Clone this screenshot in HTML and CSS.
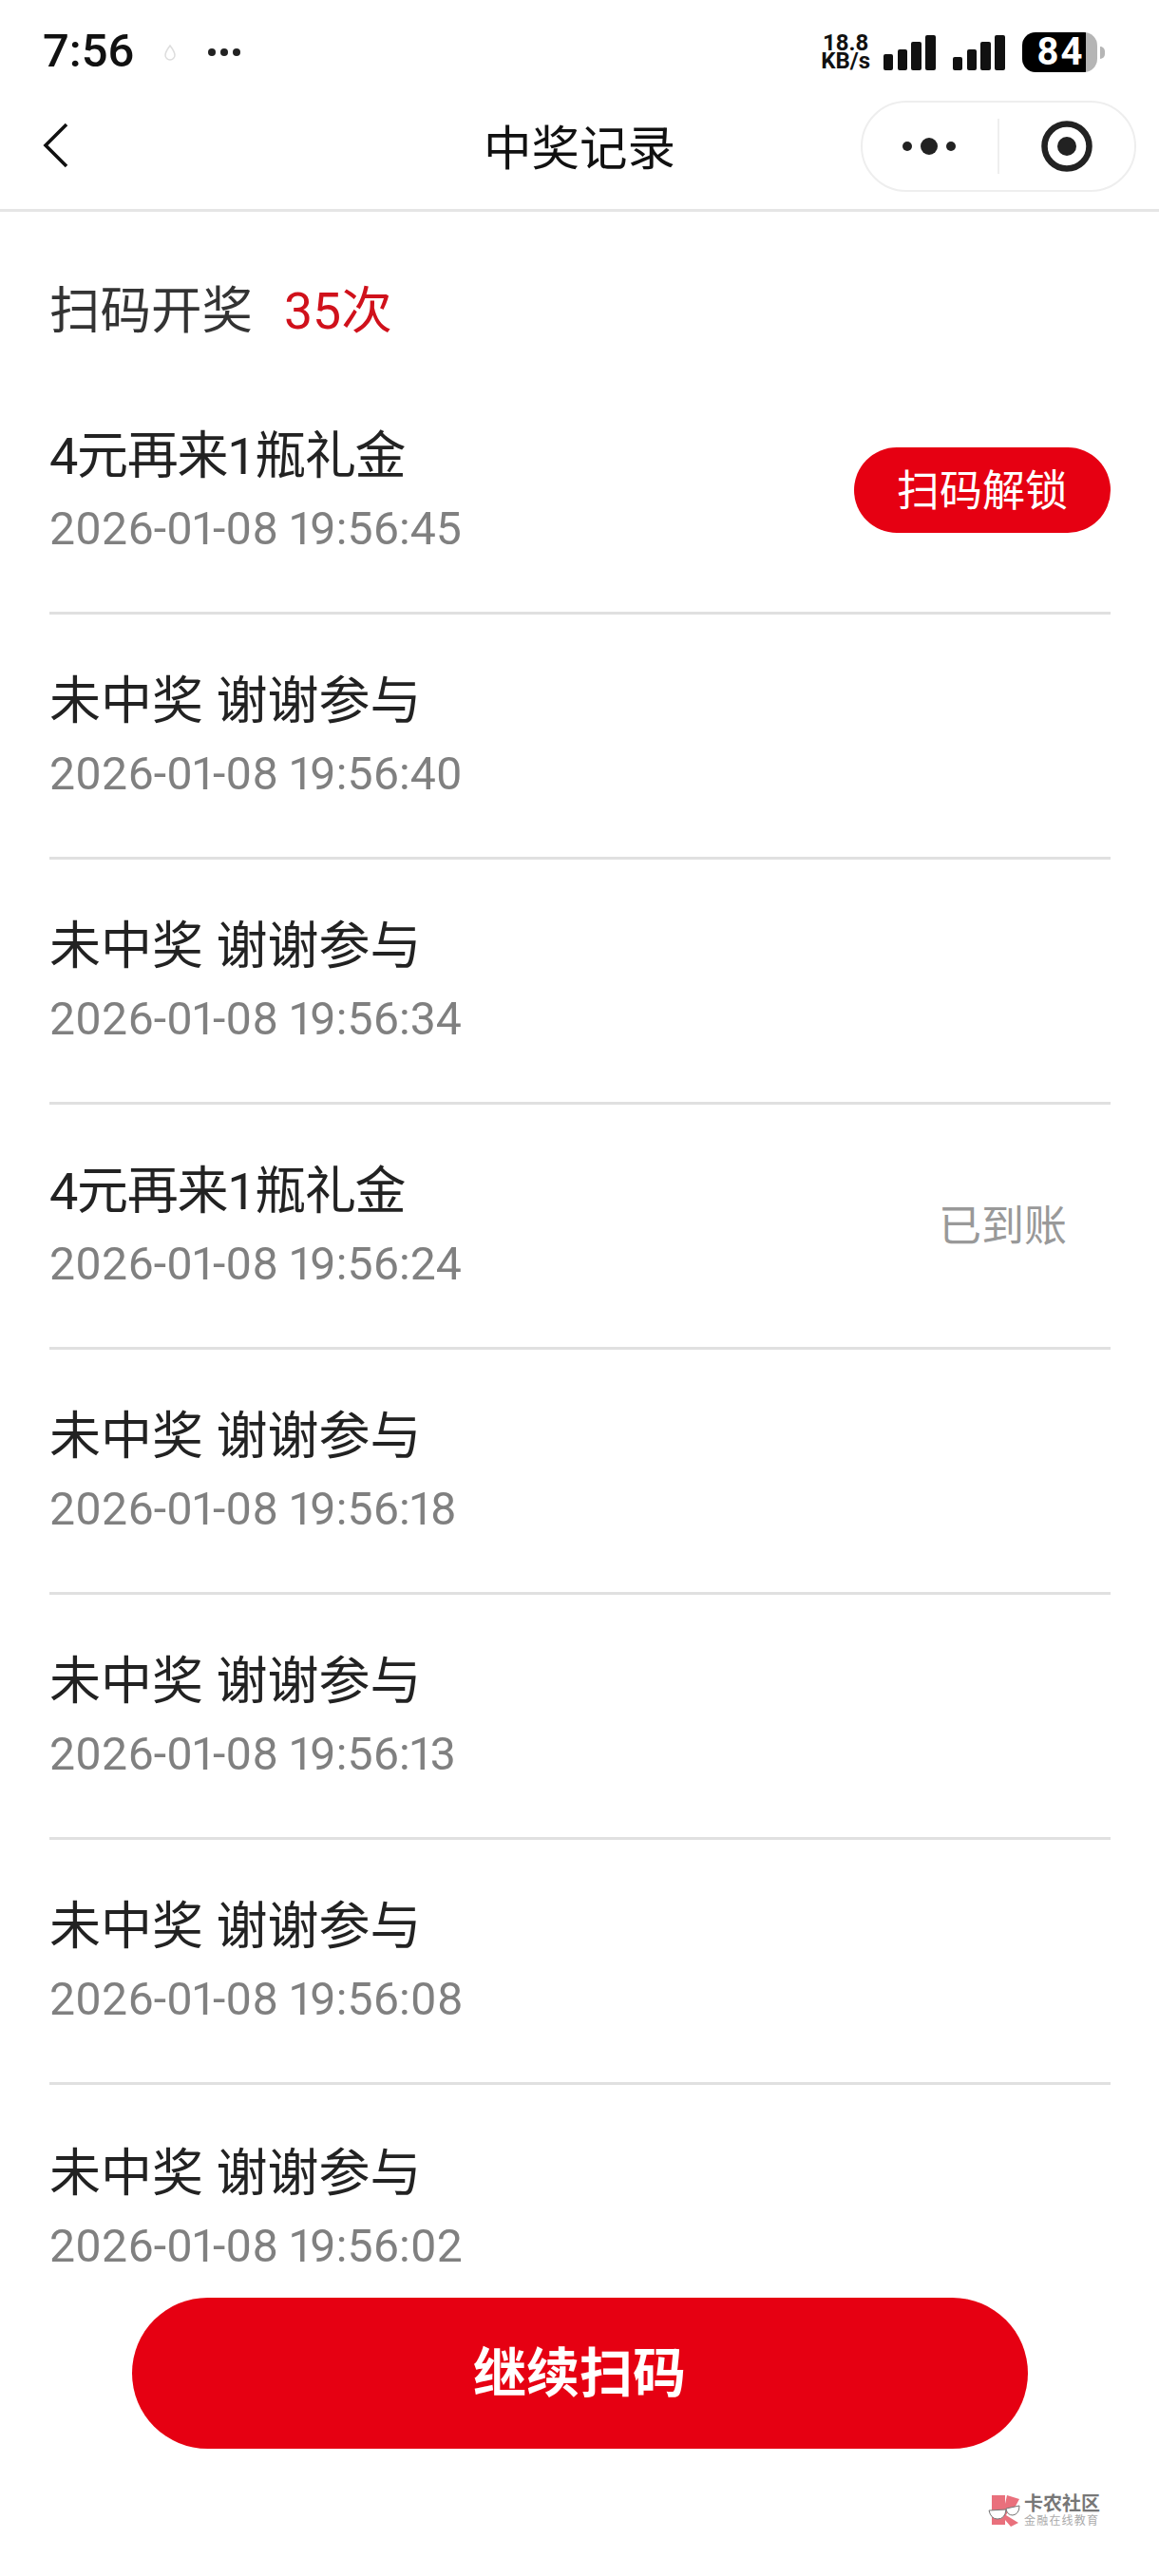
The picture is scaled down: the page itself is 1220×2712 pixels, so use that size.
FILE: index.html
```html
<!DOCTYPE html>
<html lang="zh-CN">
  <head>
    <meta charset="UTF-8" />
    <meta name="viewport" content="width=device-width, initial-scale=1.0" />
    <link rel="stylesheet" href="styles.css">
    <title>中奖记录</title>
  </head>
  <body>
    <div class="page">
      <!-- status bar -->
      <div class="status-bar">
        <div class="status-left">
          <span class="clock">7:56</span>
          <svg class="drop" width="14" height="17" viewBox="0 0 14 17"><path d="M7 1 C4 5 2 8 2 11 a5 5 0 0 0 10 0 C12 8 10 5 7 1z" fill="none" stroke="#ddd" stroke-width="1.5"/></svg>
          <span class="more-dots"><i></i><i></i><i></i></span>
        </div>
        <div class="status-right">
          <span class="speed">18.8<br>KB/s</span>
          <svg class="signal" width="55" height="37" viewBox="0 0 55 37"><rect x="0" y="20" width="10" height="17" rx="2"/><rect x="15" y="15" width="10" height="22" rx="2"/><rect x="29" y="7" width="11" height="30" rx="2"/><rect x="44" y="0" width="11" height="37" rx="2"/></svg>
          <svg class="signal" width="55" height="37" viewBox="0 0 55 37"><rect x="0" y="23" width="10" height="14" rx="2"/><rect x="15" y="15" width="10" height="22" rx="2"/><rect x="29" y="7" width="11" height="30" rx="2"/><rect x="44" y="0" width="11" height="37" rx="2"/></svg>
          <div class="battery"><span class="battery-level">84</span></div>
          <span class="battery-nub"></span>
        </div>
      </div>

      <!-- nav -->
      <div class="nav">
        <svg class="back" width="28" height="48" viewBox="0 0 28 48"><path d="M25 2 L3 24 L25 46" fill="none" stroke="#111" stroke-width="3.6"/></svg>
        <div class="nav-title">中奖记录</div>
        <div class="capsule">
          <div class="capsule-btn">
            <svg width="58" height="20" viewBox="0 0 58 20"><circle cx="5" cy="10" r="5" fill="#222"/><circle cx="28" cy="10" r="9" fill="#222"/><circle cx="51" cy="10" r="5" fill="#222"/></svg>
          </div>
          <span class="capsule-line"></span>
          <div class="capsule-btn">
            <svg width="54" height="54" viewBox="0 0 54 54"><circle cx="27" cy="27" r="23.5" fill="none" stroke="#222" stroke-width="6.5"/><circle cx="27" cy="27" r="10" fill="#222"/></svg>
          </div>
        </div>
      </div>

      <div class="summary">
        <span>扫码开奖</span>
        <span class="summary-count">35次</span>
      </div>

      <ul class="record-list">
        <li class="record">
          <div>
            <div class="record-name prize">4元再来1瓶礼金</div>
            <div class="record-time">2026-01-08 19:56:45</div>
          </div>
          <button class="unlock">扫码解锁</button>
        </li>
        <li class="record">
          <div>
            <div class="record-name">未中奖 谢谢参与</div>
            <div class="record-time">2026-01-08 19:56:40</div>
          </div>
        </li>
        <li class="record">
          <div>
            <div class="record-name">未中奖 谢谢参与</div>
            <div class="record-time">2026-01-08 19:56:34</div>
          </div>
        </li>
        <li class="record">
          <div>
            <div class="record-name prize">4元再来1瓶礼金</div>
            <div class="record-time">2026-01-08 19:56:24</div>
          </div>
          <span class="arrived">已到账</span>
        </li>
        <li class="record">
          <div>
            <div class="record-name">未中奖 谢谢参与</div>
            <div class="record-time">2026-01-08 19:56:18</div>
          </div>
        </li>
        <li class="record">
          <div>
            <div class="record-name">未中奖 谢谢参与</div>
            <div class="record-time">2026-01-08 19:56:13</div>
          </div>
        </li>
        <li class="record">
          <div>
            <div class="record-name">未中奖 谢谢参与</div>
            <div class="record-time">2026-01-08 19:56:08</div>
          </div>
        </li>
        <li class="record">
          <div>
            <div class="record-name">未中奖 谢谢参与</div>
            <div class="record-time">2026-01-08 19:56:02</div>
          </div>
        </li>
      </ul>

      <!-- bottom button sits over the list -->
      <div class="footer">
        <button class="continue">继续扫码</button>
        <div class="watermark">
          <svg width="34" height="35" viewBox="0 0 34 35">
            <path d="M4 1 H18 V10 L20 1 L33 5 L27 16 H22 L19 22 L32 30 L24 34 L18 27 V32 H4z" fill="#e9707c"/>
            <path d="M1 17 L19 16 Q18 26 10 26 Q3 26 1 17z" fill="#fff" stroke="#777" stroke-width="1"/>
            <path d="M19 15 L33 12 Q33 21 26 22 Q20 22 19 15z" fill="#fff" stroke="#777" stroke-width="1"/>
          </svg>
          <div>
            <div class="watermark-name">卡农社区</div>
            <div class="watermark-sub">金融在线教育</div>
          </div>
        </div>
      </div>
    </div>
  </body>
</html>
```

FILE: styles.css
```css
/* Basic Style */
body {
  margin: 0;
  background: #fff;
  font-family: Roboto, "Noto Sans CJK SC", sans-serif;
  color: #222;
}
ul {
  margin: 0;
  padding: 0;
  list-style: none;
}
button {
  border: 0;
  padding: 0;
  font-family: Roboto, "Noto Sans CJK SC", sans-serif;
  color: #fff;
  background: #e60012;
}
.page {
  position: relative;
  width: 1220px;
  height: 2712px;
  overflow: hidden;
  background: #fff;
}

/* Status bar */
.status-bar {
  height: 106px;
  padding: 0 57px 0 45px;
  box-sizing: border-box;
  display: flex;
  justify-content: space-between;
  align-items: center;
}
.status-left,
.status-right {
  display: flex;
  align-items: center;
  margin-bottom: -4px;
}
.clock {
  font-size: 49px;
  line-height: 50px;
  font-weight: 500;
  color: #111;
  margin-top: -2px;
}
.drop {
  margin-left: 31px;
}
.more-dots {
  display: flex;
  gap: 5px;
  margin-left: 33px;
}
.more-dots i {
  width: 8px;
  height: 8px;
  border-radius: 50%;
  background: #222;
}
.speed {
  font-size: 24px;
  line-height: 19px;
  font-weight: 700;
  color: #111;
  margin-right: 14px;
  text-align: center;
}
.signal {
  fill: #111;
  margin-right: 18px;
}
.battery {
  width: 79px;
  height: 42px;
  box-sizing: border-box;
  border-radius: 14px;
  background: linear-gradient(to right, #000 85%, #b5b5b5 85%);
  color: #fff;
  text-align: center;
  padding-left: 2px;
}
.battery-level {
  font-size: 40px;
  line-height: 42px;
  font-weight: 700;
  letter-spacing: 2px;
}
.battery-nub {
  width: 5px;
  height: 13px;
  margin-left: 3px;
  border-radius: 0 5px 5px 0;
  background: #b5b5b5;
}

/* Nav */
.nav {
  height: 117px;
  padding: 0 24px 0 24px;
  box-sizing: border-box;
  border-bottom: 3px solid #e5e5e5;
  display: grid;
  grid-template-columns: 1fr auto 1fr;
  align-items: center;
}
.back {
  margin-left: 21px;
  margin-top: -20px;
}
.nav-title {
  font-size: 50.5px;
  line-height: 60px;
  color: #111;
  margin-top: -12px;
}
.capsule {
  justify-self: end;
  width: 290px;
  height: 96px;
  box-sizing: border-box;
  border: 2px solid #eee;
  border-radius: 48px;
  display: flex;
  align-items: center;
  margin-top: -18px;
}
.capsule-btn {
  flex: 1;
  display: flex;
  justify-content: center;
  align-items: center;
}
.capsule-line {
  width: 2px;
  height: 58px;
  background: #eee;
}

/* Summary */
.summary {
  height: 166px;
  padding: 32px 0 0 52px;
  box-sizing: border-box;
  display: flex;
  align-items: center;
  gap: 33px;
  font-size: 53.5px;
  color: #333;
}
.summary-count {
  color: #d0111b;
}

/* Records */
.record {
  height: 258px;
  margin: 0 51px 0 52px;
  padding-top: 6px;
  box-sizing: border-box;
  border-bottom: 3px solid #e0e0e0;
  display: flex;
  justify-content: space-between;
  align-items: center;
}
.record:last-child {
  border-bottom: 0;
}
.record-name {
  font-size: 54px;
  line-height: 75px;
  color: #222;
}
.prize {
  letter-spacing: -1.3px;
}
.record-time {
  font-size: 48.2px;
  line-height: 78px;
  color: #808080;
  font-variant-numeric: proportional-nums;
}
.unlock {
  width: 270px;
  height: 90px;
  margin-bottom: 7px;
  padding-bottom: 6px;
  border-radius: 45px;
  font-size: 45px;
}
.arrived {
  margin-right: 46px;
  margin-bottom: 13px;
  font-size: 45px;
  color: #999;
}

/* Footer */
.footer {
  position: absolute;
  left: 0;
  right: 0;
  bottom: 0;
  height: 317px;
  padding-top: 24px;
  box-sizing: border-box;
  background: #fff;
}
.continue {
  display: block;
  width: 943px;
  height: 159px;
  margin: 0 auto;
  padding-bottom: 10px;
  border-radius: 80px;
  font-size: 56px;
  font-weight: 700;
}
.watermark {
  position: absolute;
  left: 1040px;
  top: 230px;
  display: flex;
  gap: 4px;
  align-items: center;
}
.watermark-name {
  font-size: 20px;
  line-height: 22px;
  font-weight: 700;
  color: #777;
}
.watermark-sub {
  font-size: 12px;
  line-height: 14px;
  letter-spacing: 1.2px;
  color: #aaa;
}
```
